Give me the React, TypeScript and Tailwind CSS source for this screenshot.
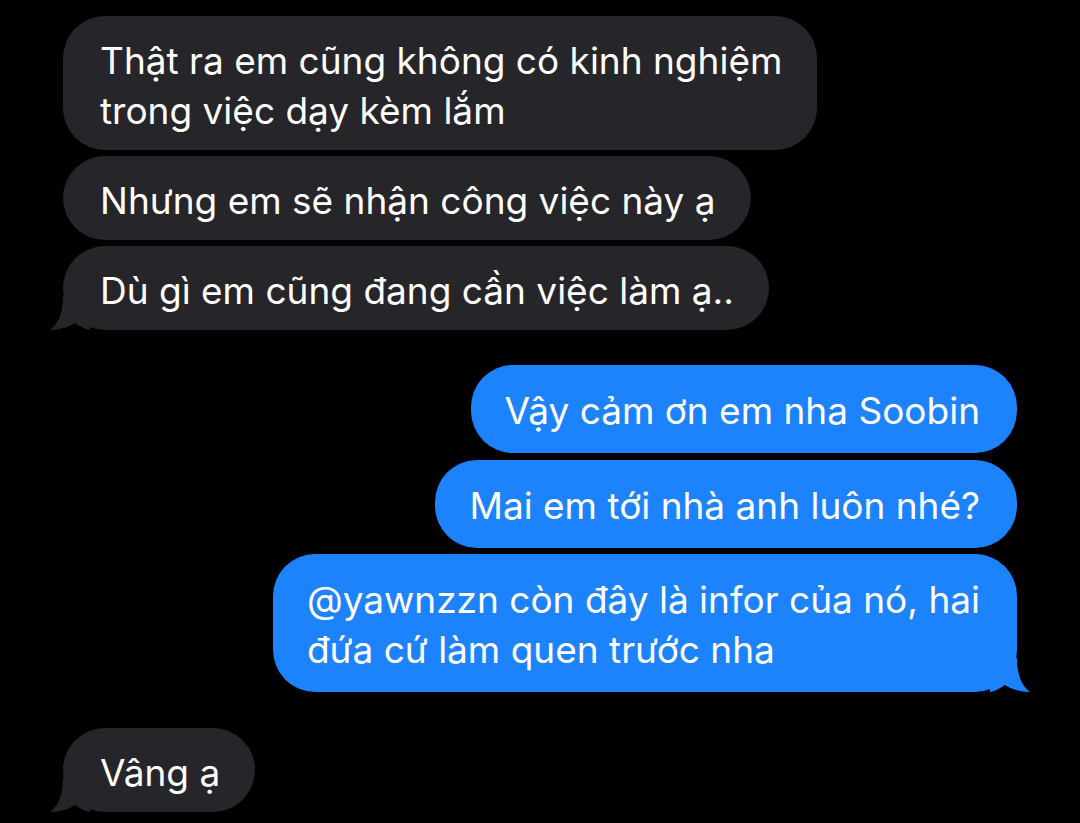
import React from "react";

const GRAY = "#262529";
const BLUE = "#1c83fc";

const TailLeft = ({ color }: { color: string }) => (
  <svg
    className="absolute bottom-0 left-[-13px]"
    width="40"
    height="34"
    viewBox="0 0 40 34"
  >
    <path
      d="M13 0 C13 18 8 28 0 34 C10 34 19 31 25 27 C30 30 34 33 40 34 L40 0 Z"
      fill={color}
    />
  </svg>
);

const TailRight = ({ color }: { color: string }) => (
  <svg
    className="absolute bottom-0 right-[-13px]"
    width="40"
    height="34"
    viewBox="0 0 40 34"
  >
    <path
      d="M27 0 C27 18 32 28 40 34 C30 34 21 31 15 27 C10 30 6 33 0 34 L0 0 Z"
      fill={color}
    />
  </svg>
);

const Received = ({
  children,
  tail,
  className = "",
}: {
  children: React.ReactNode;
  tail?: boolean;
  className?: string;
}) => (
  <div className={"relative self-start " + className}>
    <div className="relative z-10 whitespace-nowrap rounded-[42px] bg-[#262529] pt-[20px] pb-[14px] pl-[37px] pr-[35px] leading-[50px]">
      {children}
    </div>
    {tail && <TailLeft color={GRAY} />}
  </div>
);

const Sent = ({
  children,
  tail,
  className = "",
}: {
  children: React.ReactNode;
  tail?: boolean;
  className?: string;
}) => (
  <div className={"relative self-end " + className}>
    <div className="relative z-10 whitespace-nowrap rounded-[42px] bg-[#1c83fc] pt-[21px] pb-[17px] pl-[34px] pr-[37px] leading-[50px]">
      {children}
    </div>
    {tail && <TailRight color={BLUE} />}
  </div>
);

export default function App() {
  return (
    <div
      className="flex h-[823px] w-[1080px] flex-col overflow-hidden bg-black px-[63px] pt-[16px] text-[37px] text-white"
      style={{ fontFamily: "Inter, 'Noto Sans', sans-serif" }}
    >
      <Received>
        Thật ra em cũng không có kinh nghiệm
        <br />
        trong việc dạy kèm lắm
      </Received>
      <Received className="mt-[6px]">Nhưng em sẽ nhận công việc này ạ</Received>
      <Received className="mt-[6px]" tail>
        Dù gì em cũng đang cần việc làm ạ..
      </Received>

      <Sent className="mt-[35px]">Vậy cảm ơn em nha Soobin</Sent>
      <Sent className="mt-[7px]">Mai em tới nhà anh luôn nhé?</Sent>
      <Sent className="mt-[6px]" tail>
        @yawnzzn còn đây là infor của nó, hai
        <br />
        đứa cứ làm quen trước nha
      </Sent>

      <Received className="mt-[36px]" tail>
        Vâng ạ
      </Received>
    </div>
  );
}
